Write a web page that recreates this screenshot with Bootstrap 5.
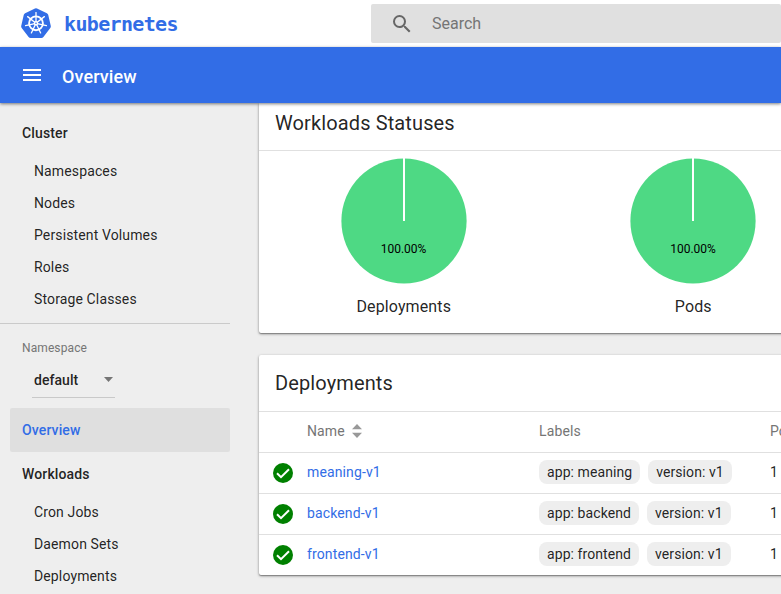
<!DOCTYPE html>
<html lang="en">
<head>
<meta charset="utf-8">
<meta name="viewport" content="width=device-width, initial-scale=1">
<title>Kubernetes Dashboard</title>
<link href="https://cdn.jsdelivr.net/npm/bootstrap@5.3.0/dist/css/bootstrap.min.css" rel="stylesheet">
<style>
html, body { height: 100%; overflow: hidden; }
body { font-family: Roboto, "Liberation Sans", sans-serif; font-size: 14px; line-height: 20px; letter-spacing: .13px; color: rgba(0,0,0,.87); background: #eee; }
svg { display: block; flex: none; }
.brand-bar { height: 47px; background: #fff; padding-left: 20px; }
.brand-name { font-family: "DejaVu Sans Mono", monospace; font-weight: 700; font-size: 20px; letter-spacing: -.66px; color: #326de6; width: 319px; padding-left: 12px; }
.search-box { height: 39px; background: #e0e0e0; border-radius: 2px; padding-left: 19px; color: #757575; font-size: 16px; letter-spacing: 0; }
.search-box span { padding-left: 18px; }
.title-bar { height: 56px; background: #326de6; color: #fff; padding-left: 20px; font-size: 18px; box-shadow: 0 1px 3px rgba(0,0,0,.5); z-index: 2; }
.title-bar span { padding-left: 18px; padding-top: 4px; font-weight: 500; letter-spacing: .1px; }
.side { width: 230px; flex: none; }
.side .nav-link { color: inherit; padding: 6px 0 6px 34px; }
.side-head { font-weight: 500; padding: 12px 22px; }
.side-first { padding-top: 20px; }
.ns-label { font-size: 12px; color: #757575; padding: 15px 22px 0; line-height: 18px; letter-spacing: .1px; }
.ns-select { width: 83px; height: 34px; margin: 7px 0 10px 32px; padding: 0 2px 2px; font-weight: 500; border-bottom: 1px solid #c9c9c9; letter-spacing: .05px; }
.side .nav-link.active { margin-left: 10px; padding: 12px; background: #dfdfdf; color: #326de6; font-weight: 500; border-radius: 2px; }
.side-rule { border-top: 1px solid #cacaca; }
.content-area { padding-left: 29px; min-width: 0; }
.panel { width: 1158px; border: 0; border-radius: 2px; color: inherit; box-shadow: 0 1px 3px rgba(0,0,0,.4), 0 1px 1px rgba(0,0,0,.25); }
.panel-status { border-radius: 0 0 2px 2px; height: 230px; margin-bottom: 22px; }
.panel-title { font-size: 20px; font-weight: 400; line-height: 24px; margin: 0; letter-spacing: .12px; padding: 16px; border-bottom: 1px solid #e0e0e0; }
.panel-status .panel-title { padding: 8px 16px 15px; }
.pie-row { padding-top: 7px; }
.pie-label { font-size: 16px; padding-top: 13px; letter-spacing: .12px; }
.panel-table { table-layout: fixed; color: inherit; width: 1158px; margin: 0; border-collapse: separate; border-spacing: 0; }
.panel-table th, .panel-table td { height: 41px; padding: 0 0 2px; vertical-align: middle; border-bottom: 1px solid #e0e0e0; background: transparent; color: inherit; font-weight: 400; }
.panel-table th { color: #757575; }
.panel-table tbody tr:last-child td { height: 40px; border-bottom: 0; }
.panel-table td:first-child { padding: 0 0 0 12px; }
.panel-table a { color: #326de6; text-decoration: none; }
.sort-icon { margin-left: 7px; }
.chip { background: #eee; border-radius: 8px; padding: 2px 8px; height: 24px; letter-spacing: .08px; }
</style>
<script src="https://cdn.jsdelivr.net/npm/bootstrap@5.3.0/dist/js/bootstrap.bundle.min.js"></script>
</head>
<body class="d-flex flex-column">
<svg width="0" height="0" class="position-absolute">
  <defs>
    <symbol id="ok" viewBox="0 0 24 24"><circle cx="12" cy="12" r="10" fill="#008000"/><path d="M6 12.2l4 4 8-8" fill="none" stroke="#fff" stroke-width="2"/></symbol>
    <symbol id="pie" viewBox="0 0 126 126"><circle cx="63" cy="63" r="62.6" fill="#4ed984"/><path d="M63 0v63" stroke="#fff" stroke-width="2"/></symbol>
  </defs>
</svg>
<header class="brand-bar d-flex align-items-center flex-shrink-0">
  <svg width="32" height="31" viewBox="0 0 32 31">
    <path d="M15 .5Q16 0 17 .5L26.900 5.200Q27.900 5.700 28.200 6.800L30.800 17.900Q31 19 30.300 19.900L23.400 28.900Q22.600 29.900 21.400 29.900H10.600Q9.400 29.900 8.600 28.900L1.700 19.900Q1 19 1.200 17.900L3.800 6.800Q4.100 5.700 5.100 5.200Z" fill="#326de6"/>
    <g stroke="#fff" fill="none">
      <circle cx="16" cy="15.300" r="6.900" stroke-width="1.900"/>
      <g stroke-width="1.300">
        <path id="spoke" d="M16 15.300V4.600" stroke-linecap="round"/>
        <use href="#spoke" transform="rotate(51.43 16 15.3)"/>
        <use href="#spoke" transform="rotate(102.86 16 15.3)"/>
        <use href="#spoke" transform="rotate(154.29 16 15.3)"/>
        <use href="#spoke" transform="rotate(205.71 16 15.3)"/>
        <use href="#spoke" transform="rotate(257.14 16 15.3)"/>
        <use href="#spoke" transform="rotate(308.57 16 15.3)"/>
      </g>
    </g>
    <circle cx="16" cy="15.300" r="2.200" fill="#fff"/><circle cx="16" cy="15.300" r=".8" fill="#326de6"/>
  </svg>
  <div class="brand-name flex-shrink-0">kubernetes</div>
  <div class="search-box d-flex align-items-center flex-grow-1">
    <svg width="24" height="24" viewBox="0 0 24 24" fill="#666"><path d="M15.5 14h-.79l-.28-.27A6.47 6.47 0 0 0 16 9.5 6.5 6.5 0 1 0 9.5 16c1.61 0 3.09-.59 4.23-1.57l.27.28v.79l5 4.99L20.49 19l-4.99-5zm-6 0a4.5 4.5 0 1 1 0-9 4.5 4.5 0 0 1 0 9z"/></svg>
    <span>Search</span>
  </div>
</header>
<div class="title-bar d-flex align-items-center flex-shrink-0 position-relative">
  <svg width="24" height="24" viewBox="0 0 24 24" fill="#fff"><path d="M3 18h18v-2H3v2zm0-5h18v-2H3v2zm0-7v2h18V6H3z"/></svg>
  <span>Overview</span>
</div>
<div class="d-flex flex-grow-1 overflow-hidden">
  <nav class="side">
    <div class="side-head side-first">Cluster</div>
    <div class="nav flex-column">
      <a class="nav-link" href="#">Namespaces</a>
      <a class="nav-link" href="#">Nodes</a>
      <a class="nav-link" href="#">Persistent Volumes</a>
      <a class="nav-link" href="#">Roles</a>
      <a class="nav-link" href="#">Storage Classes</a>
    </div>
    <div class="side-rule mt-2"></div>
    <div class="ns-label">Namespace</div>
    <div class="ns-select d-flex align-items-center justify-content-between">default
      <svg width="9" height="5" viewBox="0 0 9 5"><path d="M0 0h9L4.500 5z" fill="#757575"/></svg>
    </div>
    <a class="nav-link active d-block" href="#">Overview</a>
    <div class="side-head">Workloads</div>
    <div class="nav flex-column">
      <a class="nav-link" href="#">Cron Jobs</a>
      <a class="nav-link" href="#">Daemon Sets</a>
      <a class="nav-link" href="#">Deployments</a>
    </div>
  </nav>
  <main class="content-area flex-grow-1 overflow-hidden">
    <section class="card panel panel-status">
      <h2 class="panel-title">Workloads Statuses</h2>
      <div class="row g-0 text-center pie-row">
        <div class="col-3">
          <svg class="mx-auto" width="126" height="126" viewBox="0 0 126 126"><use href="#pie"/><text x="62.500" y="95" font-size="12" letter-spacing="0" text-anchor="middle">100.00%</text></svg>
          <div class="pie-label">Deployments</div>
        </div>
        <div class="col-3">
          <svg class="mx-auto" width="126" height="126" viewBox="0 0 126 126"><use href="#pie"/><text x="63" y="95" font-size="12" letter-spacing="0" text-anchor="middle">100.00%</text></svg>
          <div class="pie-label">Pods</div>
        </div>
      </div>
    </section>
    <section class="card panel">
      <h2 class="panel-title">Deployments</h2>
      <table class="table panel-table">
        <colgroup><col style="width:48px"><col style="width:232px"><col style="width:231px"><col></colgroup>
        <thead>
          <tr><th></th><th><div class="d-flex align-items-center">Name
            <svg class="sort-icon" width="10" height="14" viewBox="0 0 10 14" fill="#999"><path d="M0 5.200L5 0l5 5.200zM0 8.800h10L5 14z"/></svg></div></th><th>Labels</th><th>Pods</th></tr>
        </thead>
        <tbody>
          <tr><td><svg width="24" height="24"><use href="#ok"/></svg></td><td><a href="#">meaning-v1</a></td><td><div class="d-flex gap-2"><span class="chip">app: meaning</span><span class="chip">version: v1</span></div></td><td>1</td></tr>
          <tr><td><svg width="24" height="24"><use href="#ok"/></svg></td><td><a href="#">backend-v1</a></td><td><div class="d-flex gap-2"><span class="chip">app: backend</span><span class="chip">version: v1</span></div></td><td>1</td></tr>
          <tr><td><svg width="24" height="24"><use href="#ok"/></svg></td><td><a href="#">frontend-v1</a></td><td><div class="d-flex gap-2"><span class="chip">app: frontend</span><span class="chip">version: v1</span></div></td><td>1</td></tr>
        </tbody>
      </table>
    </section>
  </main>
</div>
</body>
</html>
